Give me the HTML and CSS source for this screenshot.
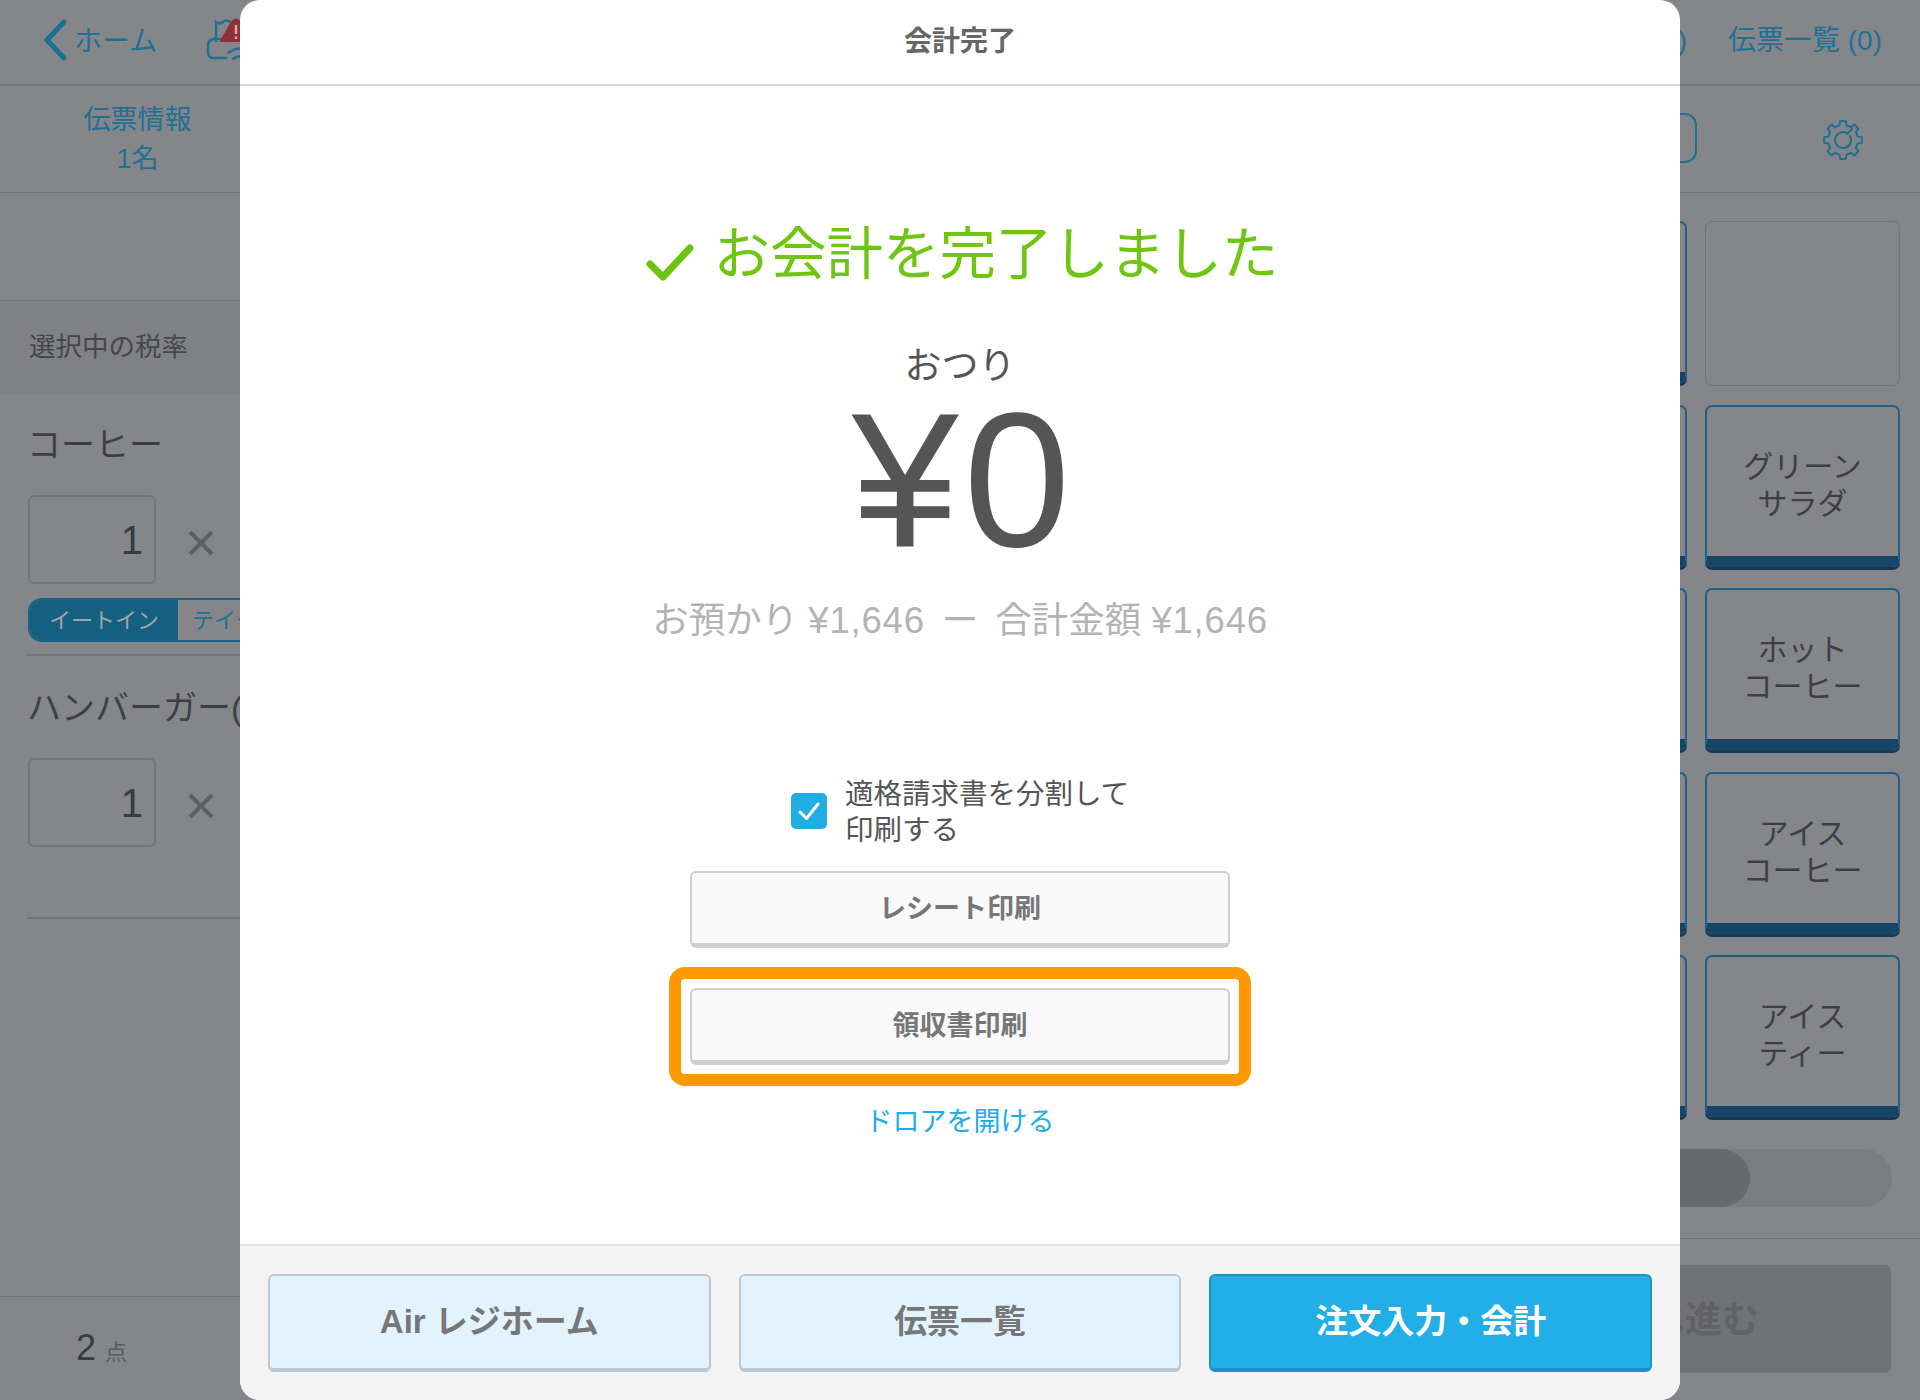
FILE: index.html
```html
<!DOCTYPE html>
<html lang="ja">
<head>
<meta charset="utf-8">
<title>会計完了</title>
<link rel="stylesheet" href="styles.css">
</head>
<body>
<div class="app">
  <header class="topbar">
    <div class="top-left">
      <svg class="back" viewBox="0 0 24 42" width="24" height="42"><path d="M21 3 L4 21 L21 39" /></svg>
      <span class="home">ホーム</span>
      <svg class="printer" viewBox="0 0 50 50" width="50" height="50">
        <path class="ln" d="M10 25V6c3 2 5 2 7 0s5-2 7 0 4 2 8 0v8"/>
        <path class="ln" d="M16 23H8a6 6 0 0 0-6 6v8a5 5 0 0 0 5 5h13"/>
        <path class="ln" d="M22 37c8-6 18-6 26 0M27 43c5-4 12-4 17 0"/>
        <path class="alert" d="M15 25 L26 6 Q30 1 34 6 L45 25 Z"/>
        <path class="mark" d="M30 9V18M30 20.500V23"/>
      </svg>
    </div>
    <div class="top-right"><span class="top-tail">(0)</span><span class="top-link">伝票一覧 (0)</span></div>
  </header>
  <div class="main">
    <aside class="left">
      <div class="info"><span>伝票情報</span><span>1名</span></div>
      <div class="blank"></div>
      <div class="taxrow">選択中の税率</div>
      <div class="item">
        <div class="item-name">コーヒー</div>
        <div class="qty-row"><div class="qty">1</div><svg class="x" viewBox="0 0 26 26" width="26" height="26"><path d="M2 2 24 24M24 2 2 24"/></svg></div>
        <div class="seg"><span class="seg-on">イートイン</span><span class="seg-off">テイクアウト</span></div>
      </div>
      <div class="item">
        <div class="item-name">ハンバーガー(単品)</div>
        <div class="qty-row"><div class="qty">1</div><svg class="x" viewBox="0 0 26 26" width="26" height="26"><path d="M2 2 24 24M24 2 2 24"/></svg></div>
      </div>
      <div class="total"><span class="total-num">2</span><span class="total-unit">点</span></div>
    </aside>
    <section class="right">
      <div class="sub">
        <div class="pill"></div>
        <svg class="gear" viewBox="0 0 40 40" width="40" height="40">
          <path d="M14.26 6.14A15 15 0 0 1 16.63 5.39L17.03 1.23A19 19 0 0 1 22.97 1.23L23.37 5.39A15 15 0 0 1 25.74 6.14"/>
          <path transform="rotate(45 20 20)" d="M14.26 6.14A15 15 0 0 1 16.63 5.39L17.03 1.23A19 19 0 0 1 22.97 1.23L23.37 5.39A15 15 0 0 1 25.74 6.14"/>
          <path transform="rotate(90 20 20)" d="M14.26 6.14A15 15 0 0 1 16.63 5.39L17.03 1.23A19 19 0 0 1 22.97 1.23L23.37 5.39A15 15 0 0 1 25.74 6.14"/>
          <path transform="rotate(135 20 20)" d="M14.26 6.14A15 15 0 0 1 16.63 5.39L17.03 1.23A19 19 0 0 1 22.97 1.23L23.37 5.39A15 15 0 0 1 25.74 6.14"/>
          <path transform="rotate(180 20 20)" d="M14.26 6.14A15 15 0 0 1 16.63 5.39L17.03 1.23A19 19 0 0 1 22.97 1.23L23.37 5.39A15 15 0 0 1 25.74 6.14"/>
          <path transform="rotate(225 20 20)" d="M14.26 6.14A15 15 0 0 1 16.63 5.39L17.03 1.23A19 19 0 0 1 22.97 1.23L23.37 5.39A15 15 0 0 1 25.74 6.14"/>
          <path transform="rotate(270 20 20)" d="M14.26 6.14A15 15 0 0 1 16.63 5.39L17.03 1.23A19 19 0 0 1 22.97 1.23L23.37 5.39A15 15 0 0 1 25.74 6.14"/>
          <path transform="rotate(315 20 20)" d="M14.26 6.14A15 15 0 0 1 16.63 5.39L17.03 1.23A19 19 0 0 1 22.97 1.23L23.37 5.39A15 15 0 0 1 25.74 6.14"/>
          <path d="M26.93 16A8 8 0 1 1 23.38 12.75"/>
          <path d="M24 14L29 9"/>
        </svg>
      </div>
      <div class="tiles">
        <div class="col">
          <div class="tile"></div>
          <div class="tile"></div>
          <div class="tile"></div>
          <div class="tile"></div>
          <div class="tile"></div>
        </div>
        <div class="col">
          <div class="tile tile-empty"></div>
          <div class="tile">グリーン<br>サラダ</div>
          <div class="tile">ホット<br>コーヒー</div>
          <div class="tile">アイス<br>コーヒー</div>
          <div class="tile">アイス<br>ティー</div>
        </div>
      </div>
      <div class="slider"><div class="thumb"></div></div>
      <div class="foot"><div class="next">へ進む</div></div>
    </section>
  </div>
</div>

<div class="modal">
  <div class="modal-head">会計完了</div>
  <div class="modal-body">
    <div class="done">
      <svg class="done-check" viewBox="0 0 48 37" width="48" height="37"><path d="M4 20 L17 33 L44 4"/></svg>
      <span>お会計を完了しました</span>
    </div>
    <div class="change-label">おつり</div>
    <div class="change">¥0</div>
    <div class="calc">お預かり <span class="amt">¥1,646</span><span class="minus">ー</span>合計金額 <span class="amt">¥1,646</span></div>
    <div class="split">
      <span class="box"><svg viewBox="0 0 36 36" width="36" height="36"><path d="M9 19 L15.500 25.500 L27 11"/></svg></span>
      <span class="split-text">適格請求書を分割して<br>印刷する</span>
    </div>
    <button class="print">レシート印刷</button>
    <div class="highlight"><button class="print">領収書印刷</button></div>
    <a class="drawer">ドロアを開ける</a>
  </div>
  <div class="modal-foot">
    <button class="act">Air レジホーム</button>
    <button class="act">伝票一覧</button>
    <button class="act act-main">注文入力・会計</button>
  </div>
</div>
</body>
</html>
```
FILE: styles.css
```css
* { box-sizing: border-box; }
html, body { margin: 0; padding: 0; }
body {
  width: 1920px;
  height: 1400px;
  overflow: hidden;
  background: #85868a;
  font-family: "Liberation Sans", "Noto Sans CJK JP", sans-serif;
  color: #3e3f43;
}
.app { width: 1920px; height: 1400px; display: flex; flex-direction: column; }
.topbar {
  height: 86px;
  flex: none;
  border-bottom: 2px solid #737478;
  display: flex;
  justify-content: space-between;
  align-items: center;
}
.top-left { display: flex; align-items: center; padding-left: 43px; padding-bottom: 5px; }
.back { fill: none; stroke: #1a6f94; stroke-width: 5; stroke-linecap: round; stroke-linejoin: round; }
.home { font-size: 28px; color: #1f7193; margin-left: 7px; line-height: 40px; padding-top: 4px; }
.printer { margin-left: 49px; margin-top: 3px; overflow: visible; flex: none; }
.printer .ln { fill: none; stroke: #1f7193; stroke-width: 2.500; stroke-linecap: round; }
.printer .alert { fill: #8f3038; stroke: #8f3038; stroke-width: 2; stroke-linejoin: round; }
.printer .mark { fill: none; stroke: #c9a9ab; stroke-width: 2.500; }
.top-right { display: flex; align-items: center; position: relative; top: -1px; }
.top-tail { font-size: 28px; color: #1f7193; line-height: 40px; margin-right: 41px; }
.top-link { font-size: 28px; color: #1f7193; margin-right: 38px; line-height: 40px; white-space: nowrap; }
.main { flex: 1; display: flex; justify-content: space-between; min-height: 0; }
.left { width: 260px; display: flex; flex-direction: column; }
.info {
  height: 107px;
  padding: 15px 0 0 0;
  width: 275px;
  display: flex;
  flex-direction: column;
  align-items: center;
  border-bottom: 1px solid #737478;
  font-size: 27px;
  line-height: 39px;
  color: #1f7193;
}
.blank { height: 108px; width: 240px; border-bottom: 1px solid #737478; }
.taxrow {
  height: 92px;
  padding-left: 29px;
  background: #808185;
  font-size: 26.500px;
  line-height: 92px;
  color: #45464a;
}
.item { margin-left: 27px; height: 263px; border-bottom: 2px solid #737478; }
.item-name { font-size: 34px; line-height: 48px; padding-top: 28px; height: 102px; white-space: nowrap; color: #3e3f43; }
.qty-row { display: flex; align-items: center; margin-left: 1px; }
.qty {
  width: 128px;
  height: 89px;
  border: 2px solid #737478;
  border-radius: 6px;
  text-align: right;
  padding-right: 11px;
  font-size: 40px;
  line-height: 87px;
  color: #3a3b3f;
}
.x { margin-left: 32px; margin-top: 7px; fill: none; stroke: #5e5f63; stroke-width: 4; }
.seg { margin: 14px 0 0 1px; height: 44px; display: flex; width: 320px; background: #85868a; border: 2px solid #176285; border-radius: 14px 0 0 14px; overflow: hidden; font-size: 22px; white-space: nowrap; }
.seg-on { width: 148px; flex: none; background: #156080; color: #a3a4a8; line-height: 41px; text-align: center; }
.seg-off { color: #1f7193; line-height: 41px; padding-left: 14px; }
.total { margin-top: 377px; padding: 0 0 0 76px; display: flex; align-items: baseline; border-top: 1px solid #737478; height: 104px; line-height: 102px; width: 240px; }
.total-num { font-size: 36px; color: #3a3b3f; }
.total-unit { font-size: 22px; color: #5a5b5f; margin-left: 9px; }
.right { width: 260px; display: flex; flex-direction: column; align-items: flex-start; }
.sub { height: 107px; width: 260px; flex: none; border-bottom: 1px solid #737478; display: flex; align-items: center; }
.pill { width: 37px; height: 50px; border: 2px solid #1f7193; border-left: 0; border-radius: 0 12px 12px 0; margin-top: -3px; flex: none; }
.gear { margin-left: 126px; margin-top: 1px; fill: none; stroke: #1f7193; stroke-width: 2; stroke-linecap: round; stroke-linejoin: round; flex: none; }
.tiles { display: flex; gap: 18px; padding-top: 28px; }
.col { display: flex; flex-direction: column; gap: 21.500px; width: 195px; }
.col:first-child { margin-left: -168px; }
.tile {
  width: 195px;
  height: 162px;
  padding-top: 7px;
  border: 2px solid #1c6088;
  border-bottom: 11px solid #184566;
  border-radius: 7px;
  box-shadow: 0 3px 0 #143a57;
  display: flex;
  align-items: center;
  justify-content: center;
  text-align: center;
  font-size: 30px;
  line-height: 37px;
  color: #3e3f43;
}
.tile-empty { height: 165px; margin-bottom: -3px; border: 1px solid #737478; box-shadow: none; }
.slider { margin-top: 32px; margin-left: -60px; width: 292px; height: 58px; flex: none; background: #7b7c80; border-radius: 29px; }
.thumb { width: 150px; height: 58px; background: #68696d; border-radius: 29px; }
.foot { margin-top: 31px; border-top: 1px solid #737478; padding-top: 26px; width: 260px; flex: none; }
.next {
  margin-left: -40px;
  width: 271px;
  height: 108px;
  padding-left: 28px;
  background: #717276;
  border-radius: 6px;
  font-size: 37px;
  font-weight: 700;
  line-height: 112px;
  color: #616266;
  white-space: nowrap;
}

.modal {
  position: absolute;
  left: 240px;
  top: 0;
  width: 1440px;
  height: 1400px;
  background: #fff;
  border-radius: 20px;
  overflow: hidden;
  display: flex;
  flex-direction: column;
  color: #555;
}
.modal-head {
  height: 86px;
  flex: none;
  border-bottom: 2px solid #d8d8d8;
  text-align: center;
  font-size: 28px;
  font-weight: 700;
  line-height: 84px;
  color: #666;
}
.modal-body { flex: 1; display: flex; flex-direction: column; align-items: center; min-height: 0; }
.done { display: flex; align-items: center; margin-top: 138px; height: 62px; color: #6fc612; font-size: 56.500px; line-height: 62px; padding-left: 4px; }
.done-check { fill: none; stroke: #6cc40c; stroke-width: 7; stroke-linecap: round; stroke-linejoin: round; margin-right: 20px; margin-top: 15px; flex: none; }
.change-label { margin-top: 57px; font-size: 37px; line-height: 48px; }
.change { font-size: 192px; letter-spacing: 5px; line-height: 170px; margin-top: 4px; padding-left: 7px; color: #555; }
.calc { margin-top: 31px; font-size: 36.500px; line-height: 50px; color: #b4b4b4; white-space: nowrap; }
.amt { letter-spacing: 0.800px; }
.minus { margin: 0 17px; }
.split { margin-top: 127px; display: flex; align-items: center; gap: 18px; }
.box { width: 36px; height: 36px; background: #20ade4; border-radius: 5px; flex: none; display: block; }
.box svg { display: block; fill: none; stroke: #fff; stroke-width: 3; stroke-linecap: round; stroke-linejoin: round; }
.split-text { font-size: 28.500px; line-height: 36px; color: #555; padding-top: 3px; }
.print {
  display: block;
  width: 540px;
  height: 77px;
  background: #f9f9f9;
  border: 2px solid #cfcfcf;
  border-bottom-width: 5px;
  border-radius: 6px;
  font: 700 27px/66px "Liberation Sans", "Noto Sans CJK JP", sans-serif;
  color: #777;
  padding: 2px 0 0;
  margin-top: 23px;
}
.highlight {
  margin-top: 19px;
  width: 582px;
  height: 119px;
  border: 12px solid #ff9900;
  border-radius: 16px;
  display: flex;
  align-items: center;
  justify-content: center;
}
.highlight .print { margin: 0; }
.drawer { margin-top: 17px; font-size: 27px; line-height: 38px; color: #20ade4; }
.modal-foot {
  height: 156px;
  flex: none;
  border-top: 2px solid #e2e2e2;
  background: #f3f3f3;
  padding: 28px 28px 0;
  display: flex;
  gap: 28px;
}
.act {
  flex: 1;
  height: 98px;
  background: #e3f3fd;
  border: 2px solid #bdc9d2;
  border-bottom-width: 4px;
  border-radius: 6px;
  font: 700 33px/90px "Liberation Sans", "Noto Sans CJK JP", sans-serif;
  color: #777;
  padding: 0;
}
.act-main { background: #22aee6; border-color: #1c93c4; color: #fff; }
```
